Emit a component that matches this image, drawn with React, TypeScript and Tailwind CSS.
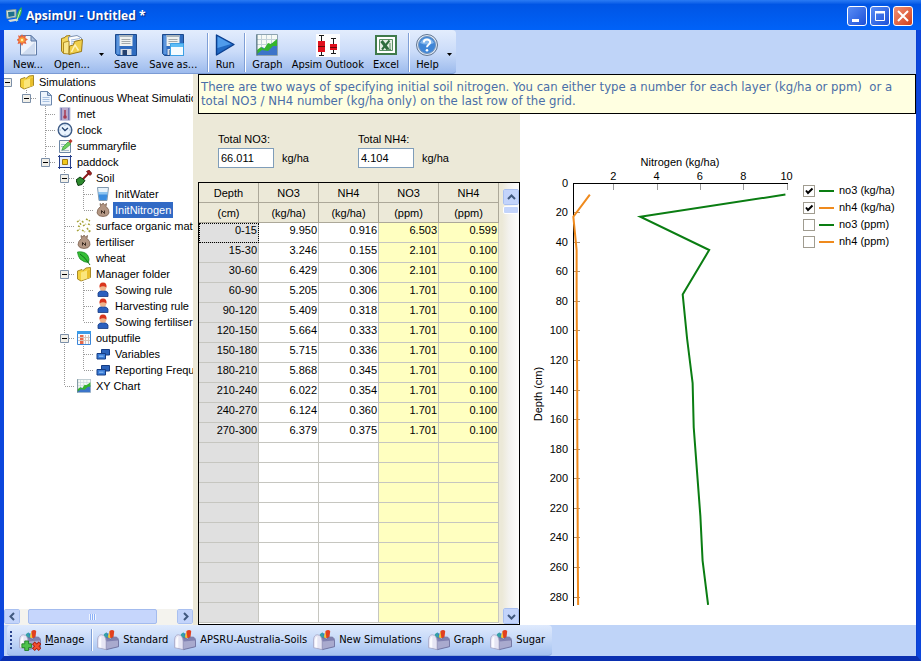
import React from "react";

/* ---------- icons ---------- */

function AppIcon() {
  return (
    <svg className="size-4" viewBox="0 0 16 16" aria-hidden="true">
      <path d="M0 3.500 L10 2.500 L10 10 L1 11.500 Z" fill="#d5ded8" stroke="#7f9c9c" strokeWidth="1" />
      <path d="M2 5 L8.500 4.500 L8.500 9 L2.500 10 Z" fill="#1c6f8c" />
      <path d="M2 13 L11 11.500 L12.500 13.500 L4 15 Z" fill="#d8dcd4" />
      <path d="M11 13 C9.500 9 12 3 15.500 0 C16.500 5 15 10 11 13 Z" fill="#39b54a" />
      <path d="M10.500 14.500 L14.500 3" stroke="#c9f2c0" strokeWidth="1" />
    </svg>
  );
}

function NewIcon() {
  return (
    <svg className="size-[22px]" viewBox="0 0 22 22" aria-hidden="true">
      <path d="M3.500 1.500 H14 L19.500 7 V21 H3.500 Z" fill="#eef3fb" stroke="#5f7ba6" />
      <path d="M5 20 L18 8 V20 Z" fill="#cfdcf0" />
      <path d="M14 1.500 V7 H19.500 Z" fill="#a9bfdf" stroke="#5f7ba6" />
      <path d="M5 0 l1.200 2.200 L9 1.200 l-.6 2.800 2.600 1.500 -2.400 1.600 .8 2.900 -2.900-.7L5 12 3.600 9.300 .6 10 l.8-2.800L-.6 5.800 1.800 4.200 1 1.300 3.800 2.200z" fill="#e8663e" />
      <circle cx="5" cy="6" r="2.800" fill="#f9a23a" />
      <circle cx="5" cy="6" r="1.200" fill="#fff0a8" />
    </svg>
  );
}

function OpenIcon() {
  return (
    <svg className="size-[22px]" viewBox="0 0 22 22" aria-hidden="true">
      <path d="M.5 4.500 L4 3.500 L5 2 L9 1.500 V17 L2.500 19.500 L.5 17 Z" fill="#f5d75c" stroke="#9c7a18" />
      <path d="M7.500 3 L16 1.500 L20.500 4 V17 L8 19 Z" fill="#fdfdfd" stroke="#7f93b3" />
      <path d="M10 6 L19 4.500 M10 8 L19 6.500 M10 10 L13 9.500" stroke="#9db6dd" strokeWidth="1" />
      <path d="M2.500 8.500 L8 7 V20 L2.500 19.500 Z" fill="#f9e68c" stroke="#b08c22" />
      <path d="M8.500 12 L12.500 11 L13.500 7.500 L21.500 5.500 L20.500 17.500 L8 20.500 Z" fill="#f0cf4a" stroke="#9c7a18" />
      <path d="M10.500 18 L14 11 L17.500 16.500" stroke="#fff3b8" fill="none" strokeWidth="1.500" />
    </svg>
  );
}

function SaveIcon({ withWindow = false }: { withWindow?: boolean }) {
  return (
    <svg className="size-[22px]" viewBox="0 0 22 22" aria-hidden="true">
      <path d="M.5 .5 H21.500 V21.500 H2.500 L.5 19.500 Z" fill="#2f6cc0" stroke="#1d4a8c" />
      <path d="M1.500 1.500 H4.500 V20 H1.500 Z" fill="#5b95dd" />
      <path d="M4.500 1 H17.500 V12 H4.500 Z" fill="#eef1f0" />
      <path d="M4.500 1 H17.500 V3 H4.500 Z" fill="#a8b4bc" />
      <path d="M6.500 5.500 H15.500 M6.500 7.500 H15.500 M6.500 9.500 H15.500" stroke="#a2a9ac" />
      <path d="M5.500 15 H16.500 V21 H5.500 Z" fill="#d7dde6" />
      <path d="M7.500 16 H12 V21 H7.500 Z" fill="#24406e" />
      {withWindow && (
        <g>
          <path d="M8.500 9.500 H21.500 V21.500 H8.500 Z" fill="#f4fbff" stroke="#3ba0e6" />
          <path d="M9 10 H21 V13 H9 Z" fill="#5cbcf5" />
        </g>
      )}
    </svg>
  );
}

function RunIcon() {
  return (
    <svg className="h-[22px] w-5" viewBox="0 0 20 22" aria-hidden="true">
      <path d="M1.500 1 L19 10.500 L1.500 21 Z" fill="#2069c4" stroke="#0b3f8f" strokeWidth="1.400" strokeLinejoin="round" />
      <path d="M2.500 2.500 L16 10 L2.500 14 Z" fill="#4f9cec" />
    </svg>
  );
}

function GraphIcon({ className = "size-[22px]" }: { className?: string }) {
  return (
    <svg className={className} viewBox="0 0 22 22" aria-hidden="true">
      <path d="M.5 .5 H21.500 V21.500 H.5 Z" fill="#f6faf6" stroke="#8da3b0" />
      <path d="M5.500 1 V21 M10.500 1 V21 M15.500 1 V21 M1 5.500 H21 M1 10.500 H21" stroke="#c3d2d8" />
      <path d="M1 18 L6 13 L10 15 L16 9 L21 10 V21 H1 Z" fill="#3c74c9" />
      <path d="M1 16 L5 13 L8 15 L12 9 L15 10 L21 5 V12 L17 12 L12 17 L6 16 L1 20 Z" fill="#35b52c" />
      <path d="M1 .5 V21.500" stroke="#50707f" />
    </svg>
  );
}

function BoxPlotIcon() {
  return (
    <svg className="h-[23px] w-6" viewBox="0 0 24 23" aria-hidden="true">
      <path d="M0 0 H24 V23 H0 Z" fill="#fdfdfd" />
      <path d="M5.500 1 V22 M3 1.500 H8 M3 21.500 H8 M17.500 4 V20 M15 4.500 H20 M15 19.500 H20" stroke="#1a1a1a" />
      <path d="M2 7 H9 V18 H2 Z M14 10 H21 V16 H14 Z" fill="#e0101c" />
      <path d="M2 12.500 H9 M14 13.500 H21" stroke="#6b0a0a" />
    </svg>
  );
}

function ExcelIcon() {
  return (
    <svg className="size-[22px]" viewBox="0 0 22 22" aria-hidden="true">
      <path d="M1 2 H21 V20 H1 Z" fill="#fff" stroke="#3f7a4b" strokeWidth="2" />
      <path d="M4.500 5.500 H17.500 V16.500 H4.500 Z" fill="#e6efe4" stroke="#5b9064" />
      <path d="M6.500 7 L13 15.500" stroke="#2f6d3c" strokeWidth="3" />
      <path d="M14.500 6.500 L7 15.500" stroke="#2f6d3c" strokeWidth="2" />
      <path d="M15 9 V15 M12 15.500 H16" stroke="#5b9064" />
    </svg>
  );
}

function HelpIcon() {
  return (
    <svg className="size-[22px]" viewBox="0 0 22 22" aria-hidden="true">
      <circle cx="11" cy="11" r="10.500" fill="#dfe8f4" stroke="#60748f" />
      <circle cx="11" cy="11" r="8.500" fill="#3f86d8" stroke="#7093bd" />
      <path d="M4 9 A7.500 7.500 0 0 1 18 9 Q11 12 4 9 Z" fill="#83b6ec" />
      <path d="M7.800 8.500 C7.800 4.500 14.200 4.500 14.200 8.300 C14.200 10.500 11 10.500 11 13.200" fill="none" stroke="#fff" strokeWidth="2" />
      <circle cx="11" cy="16.200" r="1.300" fill="#fff" />
    </svg>
  );
}

function ToolboxIcon({ manage = false }: { manage?: boolean }) {
  return (
    <svg className="h-[22px] w-[22px]" viewBox="0 0 23 22" aria-hidden="true">
      <path d="M9 9 V4 H12 V9 Z" fill="#2b6fce" />
      <path d="M11 9 L13 2 L16 3 V9 Z" fill="#f0c23a" />
      <path d="M7 5 L10 3 L12 9 H8 Z" fill="#35a0a8" />
      <path d="M13 1.500 Q16 -.5 18 1.500 L17 10 L14 9 Z" fill="#e2401f" />
      <path d="M6 10 L10 8.500 L14 10 L17 8 H20.500 Q22.500 9 22.500 12 V18 L10 21 L4 19 Z" fill="#8081b0" stroke="#676894" strokeWidth=".8" />
      <path d="M10 12.500 L22 11.500 V17.500 L10 20.500 Z" fill="#a9aace" />
      <path d="M.5 19 V11 Q1 5.500 4.500 5.500 Q9 6 9.500 12 V21 Z" fill="#e6e5f4" stroke="#a3a4c4" strokeWidth=".8" />
      <path d="M2 18.500 V11 Q2.500 7.500 4.500 7 V19 Z" fill="#fbfbff" />
      {manage && (
        <g>
          <path d="M6 12 H10 V15 H13 V19 H10 V22 H6 V19 H3 V15 H6 Z" fill="#4fc24c" stroke="#1b7a22" strokeWidth=".9" />
          <path d="M15 14 L22 21 M22 14 L15 21" stroke="#a31808" strokeWidth="4" />
          <path d="M15.500 14.500 L21.500 20.500 M21.500 14.500 L15.500 20.500" stroke="#f2502e" strokeWidth="2.400" />
        </g>
      )}
    </svg>
  );
}

type NodeIcon =
  | "folder" | "page" | "met" | "clock" | "summary" | "paddock" | "soil" | "water" | "sack"
  | "residue" | "leaf" | "person" | "output" | "variables" | "chart";

function TreeIcon({ kind }: { kind: NodeIcon }) {
  if (kind === "chart") return <GraphIcon className="size-[14px]" />;
  return (
    <svg className="size-4" viewBox="0 0 16 16" aria-hidden="true">
      {kind === "folder" && (
        <g>
          <path d="M1.500 5 L6 3.500 L7 4.500 L10 2 L14.500 1.500 V11.500 L5 15 L1.500 13 Z" fill="#f3d03c" stroke="#a88a28" />
          <path d="M5 6.500 L14 3.500 V11.500 L5 14.500 Z" fill="#fbe67c" />
          <path d="M11 4.500 L14 3.500 V11.500 L11 12.500 Z" fill="#e9bf2c" />
        </g>
      )}
      {kind === "page" && (
        <g>
          <path d="M2.500 1.500 H9.500 L13.500 5.500 V15 H2.500 Z" fill="#edf4fd" stroke="#6a86ac" />
          <path d="M9.500 1.500 V5.500 H13.500 Z" fill="#b7cbe6" stroke="#6a86ac" />
          <path d="M4.500 7.500 H11.500 M4.500 9.500 H11.500 M4.500 11.500 H11.500" stroke="#a9c2e2" />
        </g>
      )}
      {kind === "met" && (
        <g>
          <path d="M3 1.500 H13 V14.500 H3 Z" fill="#7477b4" stroke="#c6c8e0" />
          <path d="M5 2 H11 V14 H5 Z" fill="#b9a9cc" />
          <path d="M8 4 V10" stroke="#a83a52" strokeWidth="1.500" />
          <circle cx="8" cy="11" r="1.800" fill="#a83a52" />
        </g>
      )}
      {kind === "clock" && (
        <g>
          <circle cx="8" cy="8" r="6.800" fill="#e9f3fd" stroke="#3f5d88" strokeWidth="1.400" />
          <path d="M5 5.500 L8 8.500 L11 6" fill="none" stroke="#22406e" strokeWidth="1.300" />
          <path d="M8 2.500 V3.500 M8 12.500 V13.500 M2.500 8 H3.500 M12.500 8 H13.500" stroke="#6f8fb8" />
        </g>
      )}
      {kind === "summary" && (
        <g>
          <path d="M2.500 2.500 H13.500 V14.500 H2.500 Z" fill="#f3f7f4" stroke="#6d87a6" />
          <path d="M4 6.500 H9 M4 8.500 H8 M4 12.500 H12" stroke="#a9bcc9" />
          <path d="M5 12 L6 9 L11 4 L14 6 L8 11 Z" fill="#6fd05c" stroke="#2f9a3a" strokeWidth=".7" />
          <path d="M11.500 3.500 L13.500 1 L15.500 3 L13.500 5.500 Z" fill="#b8382c" />
        </g>
      )}
      {kind === "paddock" && (
        <g>
          <path d="M2.500 1 V15 M13.500 1 V15 M1 2.500 H15 M1 13.500 H15" stroke="#27408b" fill="none" />
          <path d="M3 3 H13 V13 H3 Z" fill="#e9eefc" />
          <path d="M5.500 5.500 H10.500 V10.500 H5.500 Z" fill="#f0c81e" stroke="#a07a10" />
        </g>
      )}
      {kind === "soil" && (
        <g>
          <path d="M6.500 9.500 L13 3" stroke="#8c1a1a" strokeWidth="2" />
          <path d="M10.500 1.500 L13 0 L16 3.500 L14 5.500 Z" fill="#a32020" stroke="#4e0d0d" strokeWidth=".7" />
          <path d="M0 10 L4 7 L9 10.500 L6 14.500 L2 15.500 Z" fill="#2d8a2e" stroke="#0d3c10" />
        </g>
      )}
      {kind === "water" && (
        <g>
          <path d="M2.500 1.500 H13.500 L12 14.500 H4 Z" fill="#e8f3fb" stroke="#7f99b0" />
          <path d="M3.500 6 H12.500 L11.700 14 H4.300 Z" fill="#3a8de0" />
          <path d="M3.500 6 H12.500 L12.200 8.500 H3.800 Z" fill="#8cc4f0" />
        </g>
      )}
      {kind === "sack" && (
        <g>
          <path d="M5 1.500 L7 3 L8 1 L9.500 3 L11.500 1.500 L11 4.500 Q14.500 7 14 11 Q13 14.500 8 14.500 Q3 14.500 2 11 Q2 7 5.500 4.500 Z" fill="#b39784" stroke="#7d6352" strokeWidth=".8" />
          <path d="M6.500 11.500 V8.500 L9.500 11.500 V8.500" fill="none" stroke="#3a2a20" />
        </g>
      )}
      {kind === "residue" && (
        <path
          d="M1 4 l3 -2 M6 3 l2 2 M10 1 l4 2 M2 8 l3 1 M7 8 l3 -2 M12 6 l3 1 M1 13 l3 -2 M6 12 l3 2 M11 10 l2 3 M13 14 l2 -2 M4 5 l1 2"
          stroke="#a6a23a"
          strokeWidth="1.500"
          strokeDasharray="2 1"
        />
      )}
      {kind === "leaf" && (
        <g>
          <path d="M1.500 2 Q8 1 11.500 5 Q14 9 12.500 12.500 Q8 12.500 4 9 Q2 6 1.500 2 Z" fill="#34c034" stroke="#1c8a24" strokeWidth=".8" />
          <path d="M4 4 Q9 7 14 15" stroke="#14701c" fill="none" />
        </g>
      )}
      {kind === "person" && (
        <g>
          <path d="M3 14.500 V11 Q3.500 9 8 8.500 Q12.500 9 13 11 V14.500 Z" fill="#2b5fbe" stroke="#173a80" strokeWidth=".8" />
          <circle cx="8" cy="5.500" r="3.300" fill="#eeb48c" />
          <path d="M4.500 5.500 Q4 .5 8 .5 Q12 .5 11.500 5.500 Q8 3 4.500 5.500 Z" fill="#d9351d" />
        </g>
      )}
      {kind === "output" && (
        <g>
          <path d="M1.500 1.500 H14.500 V14.500 H1.500 Z" fill="#f6faff" stroke="#3b86d8" />
          <path d="M1 1 H15 V4 H1 Z" fill="#3b9be8" />
          <path d="M4 5 H7.500 V14 H4 Z" fill="#e8684a" />
          <path d="M9.500 5 V14 M12.500 5 V14 M2 7.500 H14 M2 10.500 H14" stroke="#d5c4ba" />
        </g>
      )}
      {kind === "variables" && (
        <g>
          <path d="M6.500 3.500 H14.500 V9 H6.500 Z" fill="#2b62ba" stroke="#143c84" />
          <path d="M2 7.500 H10.500 V13 H2 Z" fill="#3b7cd6" stroke="#143c84" />
          <path d="M4 9.500 H8.500 V11 H4 Z" fill="#7ab0f0" />
        </g>
      )}
    </svg>
  );
}

/* ---------- window chrome ---------- */

const captionBase = "flex size-5 items-center justify-center rounded-[3px] border border-white";

function TitleBar() {
  return (
    <header className="flex h-[30px] items-center bg-linear-to-b from-[#2a7bf4] via-[#0055e5] via-15% to-[#0062f8] pr-2 pl-1.5">
      <AppIcon />
      <h1 className="ml-1 flex-1 pt-0.5 font-['Open_Sans','Noto_Sans',sans-serif] text-[12px] leading-4 font-bold text-white [text-shadow:1px_1px_1px_#0a2a80]">
        ApsimUI - Untitled *
      </h1>
      <div className="flex gap-[3px] pt-0.5">
        <button aria-label="Minimize" className={captionBase + " bg-linear-to-br from-[#5b8df5] to-[#1c4fd8]"}>
          <svg className="size-4" viewBox="0 0 16 16"><path d="M3 11 H10 V14 H3 Z" fill="#fff" /></svg>
        </button>
        <button aria-label="Maximize" className={captionBase + " bg-linear-to-br from-[#5b8df5] to-[#1c4fd8]"}>
          <svg className="size-4" viewBox="0 0 16 16"><path d="M3.500 3.500 H12.500 V12.500 H3.500 Z" fill="none" stroke="#fff" /><path d="M3 3 H13 V5.500 H3 Z" fill="#fff" /></svg>
        </button>
        <button aria-label="Close" className={captionBase + " bg-linear-to-br from-[#f09074] to-[#d23c12]"}>
          <svg className="size-4" viewBox="0 0 16 16"><path d="M3 3 L13 13 M13 3 L3 13" stroke="#fff" strokeWidth="2" /></svg>
        </button>
      </div>
    </header>
  );
}

function ToolButton({ icon, label, tight = false }: { icon: React.ReactNode; label: string; tight?: boolean }) {
  return (
    <button className={"flex flex-col items-center whitespace-nowrap " + (tight ? "px-1" : "px-[5px]")}>
      <span className="flex h-6 items-center">{icon}</span>
      <span className="pt-px leading-[14px]">{label}</span>
    </button>
  );
}

function Separator() {
  return <span className="mr-px ml-1 w-0.5 self-stretch border-r border-l border-r-white border-l-[#7f9fd6]" />;
}

function DropArrow({ label }: { label: string }) {
  return (
    <button aria-label={label} className="flex w-3 items-center justify-center pt-1">
      <svg className="h-[3px] w-[5px]" viewBox="0 0 5 3"><path d="M0 0 H5 L2.500 3 Z" fill="#000" /></svg>
    </button>
  );
}

const tahoma = "font-['Tahoma','DejaVu_Sans_Condensed','Noto_Sans',sans-serif]";

function Toolbar() {
  return (
    <div className="flex h-11 bg-[#bfd4f8]">
      <nav className={tahoma + " flex items-stretch gap-px rounded-r border-b border-[#7b9bd4] bg-linear-to-b from-[#e3edfd] via-[#cbdcf9] to-[#9dbbed] pt-[3px] pb-px pl-1 text-[11px]"}>
        <ToolButton icon={<NewIcon />} label="New..." />
        <ToolButton icon={<OpenIcon />} label="Open..." />
        <DropArrow label="Open recent" />
        <ToolButton icon={<SaveIcon />} label="Save" />
        <ToolButton icon={<SaveIcon withWindow />} label="Save as..." />
        <Separator />
        <ToolButton icon={<RunIcon />} label="Run" tight />
        <Separator />
        <ToolButton icon={<GraphIcon />} label="Graph" tight />
        <ToolButton icon={<BoxPlotIcon />} label="Apsim Outlook" tight />
        <ToolButton icon={<ExcelIcon />} label="Excel" tight />
        <Separator />
        <ToolButton icon={<HelpIcon />} label="Help" tight />
        <DropArrow label="Help topics" />
      </nav>
    </div>
  );
}

/* ---------- tree ---------- */

/* Guide codes, one per 19px column: "." blank, "|" line, "t" branch, "l" last branch,
   upper case adds an expander box and "r" is the root's box. */
type TreeRow = { guides: string; icon: NodeIcon; label: string; selected?: boolean };

const treeRows: TreeRow[] = [
  { guides: "r", icon: "folder", label: "Simulations" },
  { guides: ".L", icon: "page", label: "Continuous Wheat Simulation" },
  { guides: "..t", icon: "met", label: "met" },
  { guides: "..t", icon: "clock", label: "clock" },
  { guides: "..t", icon: "summary", label: "summaryfile" },
  { guides: "..L", icon: "paddock", label: "paddock" },
  { guides: "...T", icon: "soil", label: "Soil" },
  { guides: "...|t", icon: "water", label: "InitWater" },
  { guides: "...|l", icon: "sack", label: "InitNitrogen", selected: true },
  { guides: "...t", icon: "residue", label: "surface organic matter" },
  { guides: "...t", icon: "sack", label: "fertiliser" },
  { guides: "...t", icon: "leaf", label: "wheat" },
  { guides: "...T", icon: "folder", label: "Manager folder" },
  { guides: "...|t", icon: "person", label: "Sowing rule" },
  { guides: "...|t", icon: "person", label: "Harvesting rule" },
  { guides: "...|l", icon: "person", label: "Sowing fertiliser" },
  { guides: "...T", icon: "output", label: "outputfile" },
  { guides: "...|t", icon: "variables", label: "Variables" },
  { guides: "...|l", icon: "variables", label: "Reporting Frequency" },
  { guides: "...l", icon: "chart", label: "XY Chart" },
];

function Guide({ code, first }: { code: string; first: boolean }) {
  const down = code === "|" || code === "t" || code === "T";
  const up = down || code === "l" || code === "L";
  const across = up && code !== "|";
  const boxed = code === "r" || code === "T" || code === "L";
  return (
    <svg
      className={first ? "h-4 w-[13px] shrink-0" : "h-4 w-[19px] shrink-0"}
      viewBox={first ? "6 0 13 16" : "0 0 19 16"}
      aria-hidden="true"
    >
      <g stroke="#9a9a9a" strokeDasharray="1 1">
        {up && <path d="M9.500 0 V8" />}
        {down && <path d="M9.500 8 V16" />}
        {across && <path d="M10 8.500 H19" />}
      </g>
      {boxed && (
        <g>
          <path d="M5.500 4.500 H13.500 V12.500 H5.500 Z" fill="#f1efe8" stroke="#7b8fa8" />
          <path d="M7 8.500 H12" stroke="#000" />
        </g>
      )}
    </svg>
  );
}

const scrollButton = "flex shrink-0 items-center justify-center rounded-[2px] border border-white bg-[#c3d4fb] outline outline-[#a9c0f0] -outline-offset-1";

function Chevron({ d }: { d: string }) {
  return (
    <svg className="size-[9px]" viewBox="0 0 9 9" aria-hidden="true">
      <path d={d} fill="none" stroke="#41597f" strokeWidth="2" />
    </svg>
  );
}

function SimulationTree() {
  return (
    <aside className="flex w-[189px] shrink-0 flex-col bg-white">
      <ul role="tree" aria-label="Simulations" className="flex-1 overflow-hidden font-['Liberation_Sans',Arial,sans-serif] text-[11px] leading-4">
        {treeRows.map((row) => (
          <li key={row.label} role="treeitem" aria-selected={!!row.selected} className="flex h-4 whitespace-nowrap">
            {row.guides.split("").map((code, i) => (
              <Guide key={i} code={code} first={i === 0} />
            ))}
            <span className="flex w-5 shrink-0 items-center justify-center">
              <TreeIcon kind={row.icon} />
            </span>
            <span className={row.selected ? "bg-[#316ac5] px-0.5 text-white" : "px-0.5"}>{row.label}</span>
          </li>
        ))}
      </ul>
      <div className="flex h-4 items-stretch justify-between bg-[#f4f3ee] pb-px">
        <button aria-label="Scroll left" className={scrollButton + " w-4"}><Chevron d="M6 1 L2.500 4.500 L6 8" /></button>
        <div className="mr-5 ml-2 flex flex-1 items-center justify-center rounded-[2px] border border-[#a3bbee] bg-[#c6d6fc]">
          <span className="h-1.5 w-[7px] bg-[repeating-linear-gradient(90deg,#eef4fe_0_1px,#8cb0f8_1px_2px)]" />
        </div>
        <button aria-label="Scroll right" className={scrollButton + " w-4"}><Chevron d="M3 1 L6.500 4.500 L3 8" /></button>
      </div>
    </aside>
  );
}

/* ---------- nitrogen grid ---------- */

type Layer = { depth: string; mid: number; no3: number; nh4: number; no3ppm: number; nh4ppm: number };

const layers: Layer[] = [
  { depth: "0-15", mid: 7.5, no3: 9.95, nh4: 0.916, no3ppm: 6.503, nh4ppm: 0.599 },
  { depth: "15-30", mid: 22.5, no3: 3.246, nh4: 0.155, no3ppm: 2.101, nh4ppm: 0.1 },
  { depth: "30-60", mid: 45, no3: 6.429, nh4: 0.306, no3ppm: 2.101, nh4ppm: 0.1 },
  { depth: "60-90", mid: 75, no3: 5.205, nh4: 0.306, no3ppm: 1.701, nh4ppm: 0.1 },
  { depth: "90-120", mid: 105, no3: 5.409, nh4: 0.318, no3ppm: 1.701, nh4ppm: 0.1 },
  { depth: "120-150", mid: 135, no3: 5.664, nh4: 0.333, no3ppm: 1.701, nh4ppm: 0.1 },
  { depth: "150-180", mid: 165, no3: 5.715, nh4: 0.336, no3ppm: 1.701, nh4ppm: 0.1 },
  { depth: "180-210", mid: 195, no3: 5.868, nh4: 0.345, no3ppm: 1.701, nh4ppm: 0.1 },
  { depth: "210-240", mid: 225, no3: 6.022, nh4: 0.354, no3ppm: 1.701, nh4ppm: 0.1 },
  { depth: "240-270", mid: 255, no3: 6.124, nh4: 0.36, no3ppm: 1.701, nh4ppm: 0.1 },
  { depth: "270-300", mid: 285, no3: 6.379, nh4: 0.375, no3ppm: 1.701, nh4ppm: 0.1 },
];

const columns = [
  { name: "Depth", unit: "(cm)" },
  { name: "NO3", unit: "(kg/ha)" },
  { name: "NH4", unit: "(kg/ha)" },
  { name: "NO3", unit: "(ppm)" },
  { name: "NH4", unit: "(ppm)" },
];

const cellTones = ["bg-[#e0e0e0]", "bg-white", "bg-white", "bg-[#ffffc0]", "bg-[#ffffc0]"];

const headCell = "h-5 border-r border-b border-[#aca899] bg-[#ece9d8] p-0 text-center leading-[18px] font-normal";

function NitrogenGrid() {
  const rows: string[][] = layers.map((l) => [
    l.depth, l.no3.toFixed(3), l.nh4.toFixed(3), l.no3ppm.toFixed(3), l.nh4ppm.toFixed(3),
  ]);
  while (rows.length < 20) rows.push(["", "", "", "", ""]);
  return (
    <div className="flex flex-1 border border-black bg-white">
      <table className="w-[300px] table-fixed border-separate border-spacing-0 self-start">
        <thead>
          <tr className="h-5">
            {columns.map((c, i) => (
              <th key={i} scope="col" className={headCell}>{c.name}</th>
            ))}
          </tr>
          <tr className="h-5">
            {columns.map((c, i) => (
              <th key={i} scope="col" className={headCell}>{c.unit}</th>
            ))}
          </tr>
        </thead>
        <tbody>
          {rows.map((cells, r) => (
            <tr key={r} className="h-5">
              {cells.map((value, c) => (
                <td
                  key={c}
                  className={
                    cellTones[c] + " h-5 border-r border-b border-[#c6c6c0] p-0 pr-px pb-1 text-right leading-[15px] " +
                    (r === 0 && c === 0 ? "outline-1 -outline-offset-1 outline-black outline-dotted" : "")
                  }
                >
                  {value}
                </td>
              ))}
            </tr>
          ))}
        </tbody>
      </table>
      <div className="flex flex-1 flex-col items-end bg-linear-to-r from-[#ece9d8] from-15% via-[#f3f2ee] to-[#fefefc] pt-1.5">
        <button aria-label="Scroll up" className={scrollButton + " h-4 w-4"}><Chevron d="M1 6 L4.500 2.500 L8 6" /></button>
        <div className="mt-px h-2 w-4 rounded-[2px] border border-white bg-[#c3d4fb]" />
        <div className="flex-1" />
        <button aria-label="Scroll down" className={scrollButton + " h-4 w-4"}><Chevron d="M1 3 L4.500 6.500 L8 3" /></button>
      </div>
    </div>
  );
}

function TotalField({ id, label, value }: { id: string; label: string; value: string }) {
  return (
    <div className="w-[140px]">
      <label htmlFor={id} className="block leading-4">{label}</label>
      <div className="flex items-center gap-2 pt-px">
        <input id={id} defaultValue={value} className="h-5 w-14 border border-[#7f9db9] bg-white px-0.5 leading-4 outline-none" />
        <span>kg/ha</span>
      </div>
    </div>
  );
}

/* ---------- chart ---------- */

const xAt = (v: number) => 50 + v * 21.65;
const yAt = (d: number) => 69.5 + d * 1.4786;
const points = (key: "no3" | "nh4") => layers.map((l) => `${xAt(l[key])},${yAt(l.mid)}`).join(" ");
const xTicks = [2, 4, 6, 8, 10];
const depthTicks = Array.from({ length: 15 }, (_, i) => i * 20);

function NitrogenChart() {
  return (
    <svg
      className="h-[510px] w-[276px] shrink-0 font-['Liberation_Sans',Arial,sans-serif] text-[11px]"
      viewBox="0 0 276 510"
      role="img"
      aria-label="Nitrogen by depth"
    >
      <text x="160" y="52" textAnchor="middle">Nitrogen (kg/ha)</text>
      <text transform="translate(22 280) rotate(-90)" textAnchor="middle">Depth (cm)</text>
      <g shapeRendering="crispEdges">
        {xTicks.map((t) => (
          <path key={t} d={`M${Math.round(xAt(t)) + 0.5} 70 v6`} stroke="#9a9a9a" />
        ))}
        {depthTicks.slice(1).map((t) => (
          <path key={t} d={`M54 ${Math.round(yAt(t)) - 0.5} h6`} stroke="#b09070" />
        ))}
        <path d="M53.500 492 V69.500 H268" stroke="#000" fill="none" />
      </g>
      {xTicks.map((t) => (
        <text key={t} x={xAt(t)} y="66" textAnchor="middle">{t}</text>
      ))}
      {depthTicks.map((t) => (
        <text key={t} x="48" y={Math.round(yAt(t)) + 3} textAnchor="end">{t}</text>
      ))}
      <polyline points={points("no3")} fill="none" stroke="#0a7d12" strokeWidth="2" />
      <polyline points={points("nh4")} fill="none" stroke="#ef8a1d" strokeWidth="2" />
    </svg>
  );
}

const series = [
  { id: "s1", label: "no3 (kg/ha)", tone: "bg-[#0a7d12]", on: true },
  { id: "s2", label: "nh4 (kg/ha)", tone: "bg-[#ef8a1d]", on: true },
  { id: "s3", label: "no3 (ppm)", tone: "bg-[#0a7d12]", on: false },
  { id: "s4", label: "nh4 (ppm)", tone: "bg-[#ef8a1d]", on: false },
];

function Legend() {
  return (
    <div className="ml-[7px] flex flex-col pt-[68px] font-['Liberation_Sans',Arial,sans-serif] text-[11px]">
      {series.map((s) => (
        <div key={s.id} className="flex h-[17px] items-center">
          <span className="relative flex">
            <input id={s.id} type="checkbox" defaultChecked={s.on} className="peer size-3 appearance-none border border-[#a09c90] bg-white" />
            <svg className="pointer-events-none absolute inset-0 hidden size-3 peer-checked:block" viewBox="0 0 12 12">
              <path d="M3 5.500 L5 8 L9.500 3.500" fill="none" stroke="#000" strokeWidth="2" />
            </svg>
          </span>
          <span className={s.tone + " mr-[5px] ml-1 h-0.5 w-[15px]"} />
          <label htmlFor={s.id} className="whitespace-nowrap">{s.label}</label>
        </div>
      ))}
    </div>
  );
}

/* ---------- toolbox bar ---------- */

function BoxButton({ label, manage = false }: { label: string; manage?: boolean }) {
  return (
    <button className="flex items-center gap-1 px-[3px] whitespace-nowrap">
      <ToolboxIcon manage={manage} />
      {manage ? <span><u>{label[0]}</u>{label.slice(1)}</span> : <span>{label}</span>}
    </button>
  );
}

function ToolboxBar() {
  return (
    <div className="flex h-[31px] bg-[#bfd4f8]">
      <nav className={tahoma + " ml-[3px] flex items-stretch rounded border-b border-[#8aa8dc] bg-linear-to-b from-[#dfeafd] via-[#c6d9f8] to-[#a4c1f0] py-1 pr-1 text-[11px]"}>
        <span className="my-0.5 mr-1 ml-[3px] w-0.5 bg-[repeating-linear-gradient(180deg,#27418a_0_2px,transparent_2px_4px)]" />
        <BoxButton label="Manage" manage />
        <Separator />
        <BoxButton label="Standard" />
        <BoxButton label="APSRU-Australia-Soils" />
        <BoxButton label="New Simulations" />
        <BoxButton label="Graph" />
        <BoxButton label="Sugar" />
      </nav>
    </div>
  );
}

export default function App() {
  return (
    <div className="flex min-h-screen flex-col bg-[#0a3fd0] text-black">
      <TitleBar />
      <div className="flex flex-1 flex-col border-x-4 border-b-[5px] border-[#0c46dc] border-b-[#0a2fb0] pr-px">
        <Toolbar />
        <div className="flex flex-1 bg-[#ece9d8]">
          <SimulationTree />
          <main className="ml-[5px] flex flex-1 flex-col">
            <p className={tahoma + " border border-black bg-[#ffffe1] px-0.5 pt-[5px] pb-[5px] text-[13px] leading-[14px] text-[#4a6ea8]"}>
              There are two ways of specifying initial soil nitrogen. You can either type a number for each layer (kg/ha or ppm)&nbsp; or a total NO3 / NH4 number (kg/ha only) on the last row of the grid.
            </p>
            <div className="flex flex-1 bg-white">
              <section className="flex w-[322px] shrink-0 flex-col bg-[#ece9d8] font-['Liberation_Sans',Arial,sans-serif] text-[11px]">
                <div className="flex px-5 pt-[17px] pb-3.5">
                  <TotalField id="total-no3" label="Total NO3:" value="66.011" />
                  <TotalField id="total-nh4" label="Total NH4:" value="4.104" />
                </div>
                <NitrogenGrid />
              </section>
              <NitrogenChart />
              <Legend />
            </div>
          </main>
        </div>
        <ToolboxBar />
      </div>
    </div>
  );
}
